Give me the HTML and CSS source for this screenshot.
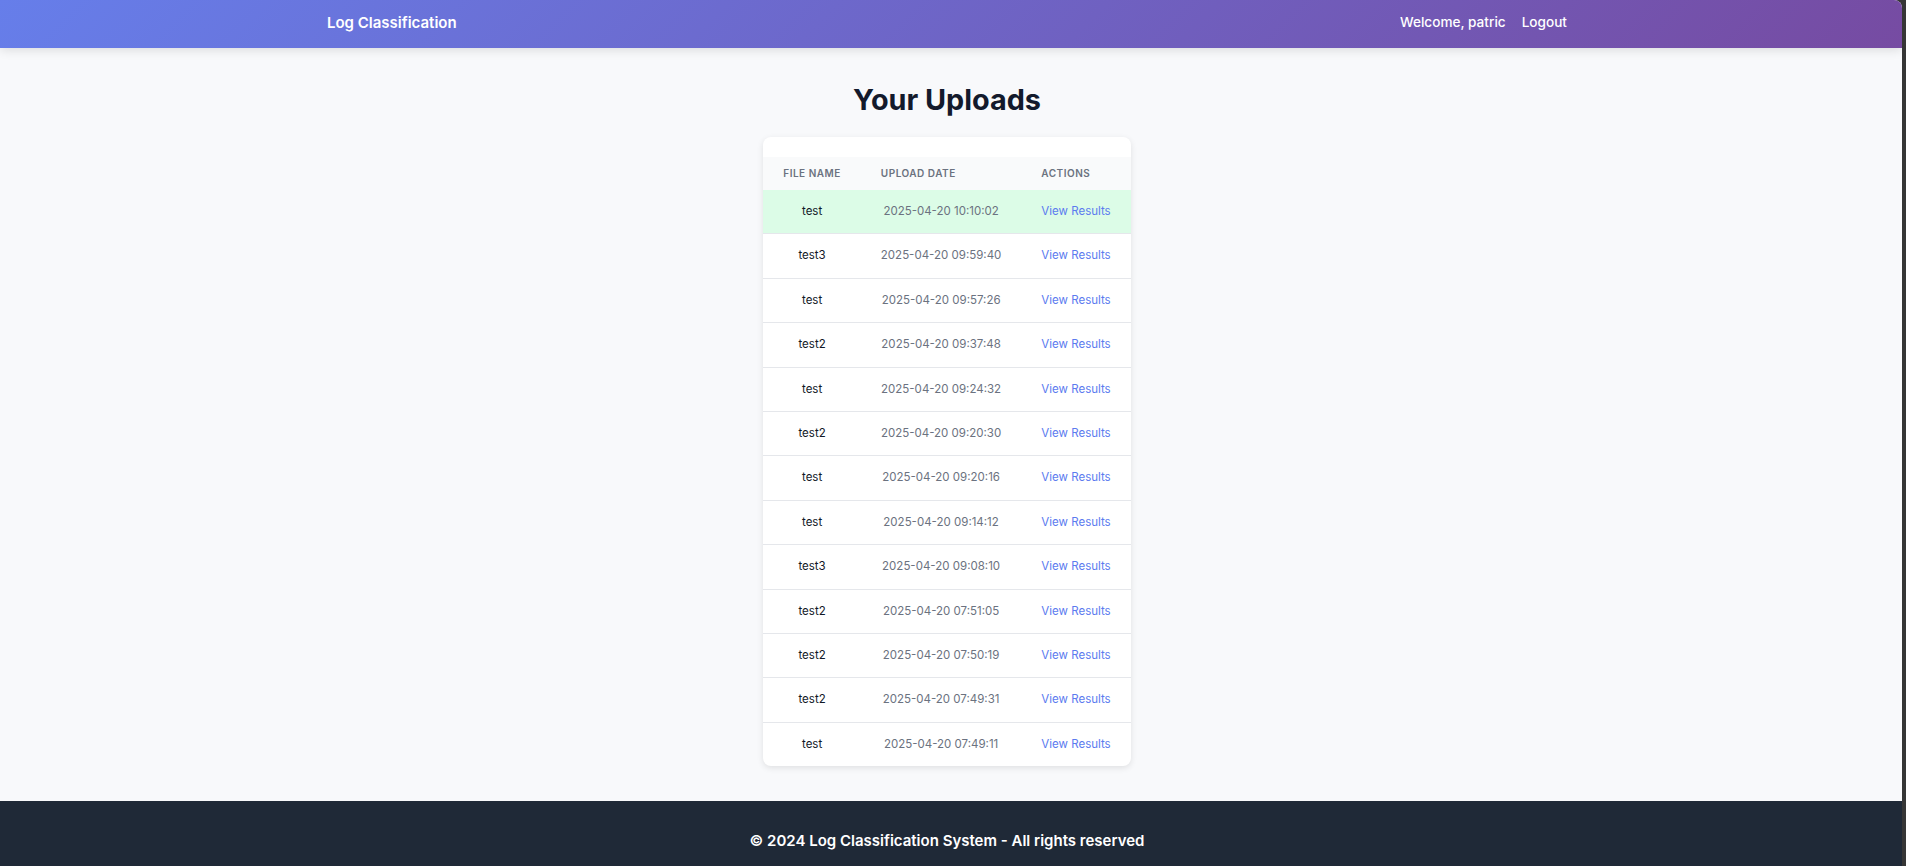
FILE: index.html
```html
<!DOCTYPE html>
<html lang="en">
<head>
<meta charset="utf-8">
<title>Your Uploads - Log Classification</title>
<link rel="stylesheet" href="styles.css">
</head>
<body>
<div class="page">
  <header class="topbar">
    <div class="topbar-inner">
      <a class="brand" href="#">Log Classification</a>
      <nav class="nav">
        <span class="welcome">Welcome, patric</span>
        <a class="nav-link" href="#">Logout</a>
      </nav>
    </div>
  </header>

  <main class="main">
    <h1 class="title">Your Uploads</h1>
    <div class="card">
      <table class="uploads">
        <thead>
          <tr>
            <th>File Name</th>
            <th>Upload Date</th>
            <th>Actions</th>
          </tr>
        </thead>
        <tbody>
          <tr class="latest"><td class="name">test</td><td class="date">2025-04-20 10:10:02</td><td><a class="link" href="#">View Results</a></td></tr>
          <tr><td class="name">test3</td><td class="date">2025-04-20 09:59:40</td><td><a class="link" href="#">View Results</a></td></tr>
          <tr><td class="name">test</td><td class="date">2025-04-20 09:57:26</td><td><a class="link" href="#">View Results</a></td></tr>
          <tr><td class="name">test2</td><td class="date">2025-04-20 09:37:48</td><td><a class="link" href="#">View Results</a></td></tr>
          <tr><td class="name">test</td><td class="date">2025-04-20 09:24:32</td><td><a class="link" href="#">View Results</a></td></tr>
          <tr><td class="name">test2</td><td class="date">2025-04-20 09:20:30</td><td><a class="link" href="#">View Results</a></td></tr>
          <tr><td class="name">test</td><td class="date">2025-04-20 09:20:16</td><td><a class="link" href="#">View Results</a></td></tr>
          <tr><td class="name">test</td><td class="date">2025-04-20 09:14:12</td><td><a class="link" href="#">View Results</a></td></tr>
          <tr><td class="name">test3</td><td class="date">2025-04-20 09:08:10</td><td><a class="link" href="#">View Results</a></td></tr>
          <tr><td class="name">test2</td><td class="date">2025-04-20 07:51:05</td><td><a class="link" href="#">View Results</a></td></tr>
          <tr><td class="name">test2</td><td class="date">2025-04-20 07:50:19</td><td><a class="link" href="#">View Results</a></td></tr>
          <tr><td class="name">test2</td><td class="date">2025-04-20 07:49:31</td><td><a class="link" href="#">View Results</a></td></tr>
          <tr><td class="name">test</td><td class="date">2025-04-20 07:49:11</td><td><a class="link" href="#">View Results</a></td></tr>
        </tbody>
      </table>
    </div>
  </main>

  <footer class="footer">
    <p class="footer-text">© 2024 Log Classification System - All rights reserved</p>
  </footer>
</div>
</body>
</html>
```

FILE: styles.css
```css
html {
  background: #363636;
}

body {
  margin: 0;
  font-family: Inter, "Noto Sans", "Liberation Sans", sans-serif;
  color: #111827;
}

.page {
  margin-right: 4px;
  background: #f8f9fb;
  border-top-right-radius: 8px;
  overflow: hidden;
  min-height: 866px;
}

.topbar {
  height: 48px;
  padding-right: 8px;
  background: linear-gradient(135deg, #667eea 0%, #764ba2 100%);
  box-shadow: 0 2px 10px rgba(0, 0, 0, 0.12);
  position: relative;
  z-index: 1;
}

.topbar-inner {
  box-sizing: border-box;
  max-width: 1280px;
  height: 100%;
  margin: 0 auto;
  padding: 0 20px 4px;
  display: flex;
  align-items: center;
  justify-content: space-between;
}

.brand {
  color: #ffffff;
  text-decoration: none;
  font-size: 15px;
  font-weight: 600;
}

.nav {
  display: flex;
  align-items: center;
  gap: 16px;
  font-size: 13.6px;
  font-weight: 500;
  color: #ffffff;
}

.nav-link {
  color: #ffffff;
  text-decoration: none;
}

.main {
  padding: 34px 8px 35px 0;
  display: flex;
  flex-direction: column;
  align-items: center;
}

.title {
  margin: 0 0 19px;
  font-size: 28.8px;
  line-height: 36px;
  font-weight: 700;
  color: #131a2c;
}

.card {
  background: #ffffff;
  border-radius: 8px;
  padding-top: 20px;
  box-shadow: 0 2px 6px rgba(0, 0, 0, 0.1);
  overflow: hidden;
}

.uploads {
  border-collapse: collapse;
}

.uploads th {
  padding: 10px 20px;
  line-height: 13px;
  background: #f9fafb;
  text-align: left;
  font-size: 10px;
  font-weight: 600;
  letter-spacing: 0.5px;
  text-transform: uppercase;
  color: #6b7280;
}

.uploads td {
  padding: 12px 20px;
  line-height: 19.4px;
  font-size: 11.5px;
  text-align: center;
  border-top: 1px solid #e5e7eb;
}

.uploads tbody tr:first-child td {
  border-top: none;
}

.uploads tr.latest td {
  background: #dcfce7;
}

.name {
  color: #111827;
}

.date {
  color: #6b7280;
}

.link {
  color: #5b7bef;
  text-decoration: none;
}

.footer {
  background: #1f2937;
  padding: 30px 8px 30px 0;
}

.footer-text {
  margin: 0;
  text-align: center;
  font-size: 15px;
  font-weight: 600;
  color: #ffffff;
}
```
